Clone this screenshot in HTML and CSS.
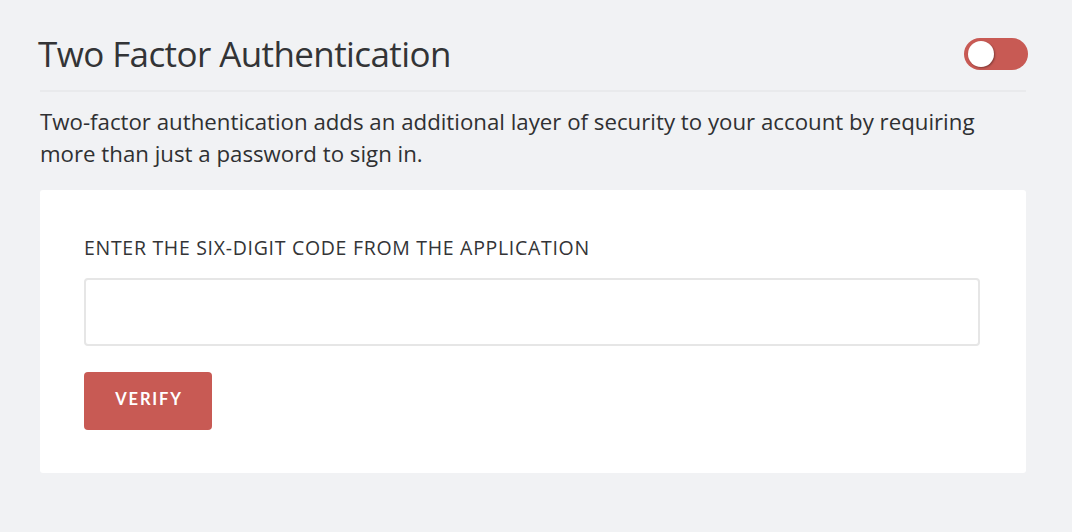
FILE: index.html
```html
<!DOCTYPE html>
<html lang="en">
<head>
<meta charset="utf-8">
<title>Two Factor Authentication</title>
<link rel="stylesheet" href="styles.css">
</head>
<body>
<main class="page">
  <header class="section-head">
    <h1 class="title">Two Factor Authentication</h1>
    <button class="toggle" type="button" aria-label="Toggle two factor authentication"><span class="knob"></span></button>
  </header>
  <p class="intro">Two-factor authentication adds an additional layer of security to your account by requiring more than just a password to sign in.</p>
  <section class="card">
    <label class="label" for="code">ENTER THE SIX-DIGIT CODE FROM THE APPLICATION</label>
    <input class="code-input" id="code" type="text">
    <button class="verify" type="button">VERIFY</button>
  </section>
</main>
</body>
</html>
```
FILE: styles.css
```css
html, body {
  margin: 0;
  background: #f1f2f4;
}
.page {
  padding: 30px 46px 0 40px;
  color: #333436;
  font-family: "Open Sans", sans-serif;
}
.section-head {
  display: flex;
  justify-content: space-between;
  align-items: center;
  padding-bottom: 12px;
  border-bottom: 2px solid #e9eaec;
}
.title {
  margin: 0 0 0 -2px;
  font-weight: 400;
  font-size: 35px;
  line-height: 48px;
  letter-spacing: -0.6px;
}
.toggle {
  width: 64px;
  height: 32px;
  margin-right: -2px;
  border: none;
  border-radius: 16px;
  background: #c85a54;
  padding: 3px 4px;
  display: flex;
  align-items: center;
  cursor: pointer;
}
.knob {
  width: 26px;
  height: 26px;
  border-radius: 50%;
  background: #fff;
  box-shadow: 1px 1px 2px rgba(0,0,0,0.35);
}
.intro {
  margin: 14px 0 20px;
  font-size: 22.25px;
  line-height: 32px;
  color: #2f3032;
}
.card {
  background: #fff;
  border-radius: 3px;
  padding: 44px 46px 43px 44px;
  display: flex;
  flex-direction: column;
  align-items: flex-start;
}
.label {
  font-size: 19.5px;
  line-height: 28px;
  letter-spacing: 0.7px;
  margin-bottom: 16px;
}
.code-input {
  box-sizing: border-box;
  width: 100%;
  height: 68px;
  border: 2px solid #e6e6e6;
  border-radius: 4px;
  margin-bottom: 26px;
  font-size: 18px;
}
.verify {
  width: 128px;
  height: 58px;
  border: none;
  border-radius: 4px;
  background: #c85a54;
  color: #fff;
  font-family: Lato, sans-serif;
  font-weight: 700;
  font-size: 16.5px;
  letter-spacing: 1.8px;
  padding: 0 0 5px 2px;
  cursor: pointer;
}
```
